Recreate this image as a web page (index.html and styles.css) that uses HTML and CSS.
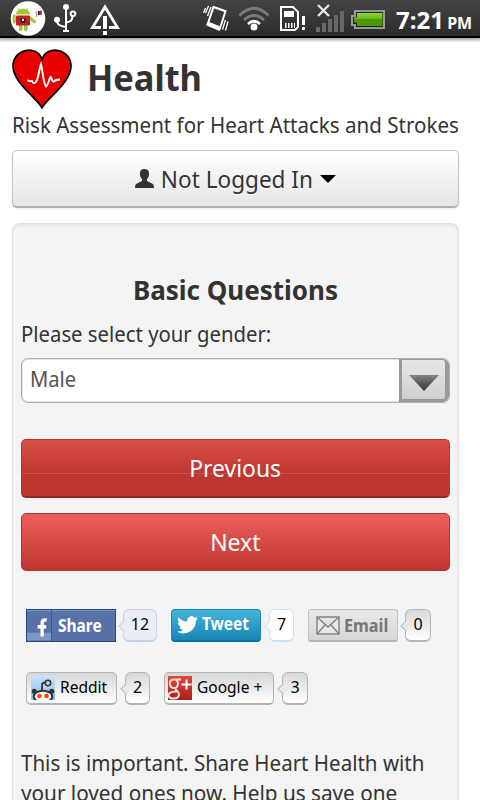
FILE: index.html
```html
<!DOCTYPE html>
<html lang="en">
<head>
<meta charset="utf-8">
<title>Health</title>
<link rel="stylesheet" href="styles.css">
</head>
<body>
<div class="status">
  <svg class="status-icons" width="390" height="37" viewBox="0 0 390 37">
    <defs><linearGradient id="bat" x2="0" y2="1"><stop offset="0" stop-color="#8bd72f"/><stop offset=".48" stop-color="#67b91c"/><stop offset=".5" stop-color="#4b9700"/><stop offset="1" stop-color="#4b9c00"/></linearGradient></defs>
    <circle cx="28" cy="18.500" r="17.300" fill="#fff"/>
    <g fill="#a4c639"><path d="M16 14.500a7 6 0 0 1 14 0z"/><rect x="12.800" y="14.500" width="3" height="9" rx="1.500"/><rect x="19" y="24" width="3.500" height="7" rx="1.500"/><rect x="24" y="24" width="3.500" height="7" rx="1.500"/><path d="M30 16l6.500 5.500-2 2.300-5-3.800z"/></g>
    <path d="M18 8l1.500 2M28 8l-1.500 2" stroke="#a4c639"/>
    <rect x="16" y="15.500" width="14" height="10" rx="1" fill="#c71d25"/><path d="M20 18l3 1 3-1-1 5h-4z" fill="#222"/><path d="M22 19h2v2h-2z" fill="#fff"/>
    <path d="M36 11l1 6" stroke="#777"/><path d="M36.500 11.500l5-1v5l-4.500.5z" fill="#ddd"/><path d="M38 11h1.800v4H38z" fill="#222"/><path d="M40 10.800h1.800v4H40z" fill="#c71d25"/>
    <g fill="none" stroke="#fff" stroke-width="2"><path d="M66 6v25M57 20c0 5 3 6 9 7M72.500 16c0 5-2 5.500-6.500 6.500"/><circle cx="73" cy="13.700" r="2.300"/></g>
    <g fill="#fff"><circle cx="66" cy="7" r="3"/><circle cx="57" cy="19.800" r="3"/><path d="M63 30h6v2h-6z"/></g>
    <path d="M101 27.500H92.500L105 7l12.500 20.500H109" fill="none" stroke="#fff" stroke-width="2.800"/><path d="M103 16h4v13h-4zM103 31h4v4h-4z" fill="#fff"/>
    <g fill="none" stroke="#fff"><path d="M213.500 7l12 4.200-5.500 17-12-5z" stroke-width="2"/><path d="M208 22l12.500 5-1 3.500-13-5.500z" fill="#fff"/><path d="M208.500 6l-3 7M205.500 8l-2 5M211 7l-3.500 9M225.500 20l-3 9.500M228 21.500l-2.500 9" stroke-width="1.300"/></g>
    <g fill="none" stroke="#7b7b7b" stroke-width="2.800"><path d="M239.500 15.500q14.500-14.500 29 0"/><path d="M244 20q10-9 20 0"/></g><path d="M248 24q6-5.500 12 0" fill="none" stroke="#fff" stroke-width="2.800"/><circle cx="254" cy="27" r="3.500" fill="#fff"/>
    <path d="M281 7h12l5 5v15l-3 3h-14z" fill="none" stroke="#fff" stroke-width="2"/><path d="M284 11h10v6h-10zM285 23h1.500v5H285zM288 23h1.500v5H288zM291 23h1.500v5H291zM294 23h1v5h-1zM302 16h3v9h-3zM302 27h3v3h-3z" fill="#fff"/>
    <path d="M316 27h4v5h-4zM322 23h4v9h-4zM328 19h4v13h-4zM334 15h4v17h-4zM340 11h4v21h-4z" fill="#686868"/><path d="M318 5l11 11M329 5l-11 11" stroke="#e8e8e8" stroke-width="2.300"/>
    <path d="M355 11h29v17h-29v-3h-3v-9h3z" fill="#222" stroke="#999" stroke-width="2"/><path d="M357 13h25.500v13H357v-3.500h-3v-5h3z" fill="url(#bat)"/>
  </svg>
  <div class="clock"><span>7:21</span> <small>PM</small></div>
</div>
<main class="page">
  <header class="brand">
    <svg width="60" height="60" viewBox="0 0 60 60"><path d="M30 59C26 50 1 34 1 17C1 0 25-5 30 10.500C35-5 59 0 59 17C59 34 34 50 30 59Z" fill="#e60000" stroke="#000" stroke-width="1.700"/><path d="M15.500 31c2 2 3 1 4.500 1 1.500 3 3.500 3 5-1 2-5 2-11 4-16 1.500 6 2 18 5 22.500 2.500-1 3-8 4.500-9.500 1.500 1 1 5 3.500 4.500 1-1.500 2-2 6-2" fill="none" stroke="#fff" stroke-width="1.900"/></svg>
    <h1><span class="fit f-h1">Health</span></h1>
  </header>
  <p class="tagline"><span class="fit f-tag">Risk Assessment for Heart Attacks and Strokes</span></p>
  <div class="login">
    <svg width="19" height="19" viewBox="0 0 19 19"><path d="M9.500 0C6 0 4.500 2 5 6c.2 2 1 3 2 4v2L1 15q-1 1-1 4h19q0-3-1-4l-6-3v-2c1-1 1.800-2 2-4 .5-4-1-6-5.500-6z" fill="#333"/></svg>
    <span class="f-login">Not Logged In</span>
    <i class="caret"></i>
  </div>
  <section class="well">
    <h2>Basic Questions</h2>
    <label><span class="fit f-label">Please select your gender:</span></label>
    <div class="select"><span class="fit f-male">Male</span><div class="select-btn"><svg width="30" height="16" viewBox="0 0 30 16"><defs><linearGradient id="ar" x2="0" y2="1"><stop stop-color="#858585"/><stop offset="1" stop-color="#333"/></linearGradient></defs><path d="M0 0h30L15 16z" fill="url(#ar)"/></svg></div></div>
    <div class="btn prev"><span class="f-btn">Previous</span></div>
    <div class="btn next"><span class="f-btn">Next</span></div>
    <div class="shares">
      <div class="share">
        <div class="chip fb"><svg width="25" height="31" viewBox="0 0 25 31"><path d="M0 23h25v8H0z" fill="#7f95c2"/><path d="M14 27V18.500h-3v-3.500h3v-2c0-4 2-5.500 6.500-5v3.500c-2.500-.2-3 .2-3 3.500H20v3.500h-2.500V27z" fill="#fff"/></svg><b class="fit">Share</b></div>
        <div class="count c-fb">12</div>
      </div>
      <div class="share">
        <div class="chip tw"><svg width="21" height="18" viewBox="0 0 24 20"><path d="M24 2.300a10 10 0 0 1-2.800.8A5 5 0 0 0 23.300.4a10 10 0 0 1-3.100 1.200 4.900 4.900 0 0 0-8.400 4.500A14 14 0 0 1 1.700 1 4.900 4.900 0 0 0 3.200 7.500 5 5 0 0 1 1 6.900a4.900 4.900 0 0 0 3.900 4.900 5 5 0 0 1-2.200.1 4.900 4.900 0 0 0 4.600 3.400A10 10 0 0 1 0 17.400 14 14 0 0 0 21.500 5 10 10 0 0 0 24 2.300z" fill="#fff"/></svg><b class="fit">Tweet</b></div>
        <div class="count c-tw">7</div>
      </div>
      <div class="share">
        <div class="chip em"><svg width="24" height="19" viewBox="0 0 24 19"><path d="M1 1h22v17H1zM1 1l11 10L23 1M1 18l8-9M23 18l-8-9" fill="#e8e8e8" stroke="#858585" stroke-width="1.500"/></svg><b class="fit">Email</b></div>
        <div class="count c-em">0</div>
      </div>
      <div class="share">
        <div class="chip plain rd"><svg width="24" height="24" viewBox="0 0 24 24"><defs><linearGradient id="sky" x2="0" y2="1"><stop stop-color="#c4e2fb"/><stop offset="1" stop-color="#8bbce9"/></linearGradient></defs><rect width="24" height="24" rx="1" fill="url(#sky)"/><path d="M11 14V8q3-3 5-1" fill="none" stroke="#333" stroke-width="1.800"/><circle cx="17" cy="7" r="2.700" fill="#ccc" stroke="#333" stroke-width="1.500"/><circle cx="3.300" cy="15.300" r="2.500" fill="#333"/><circle cx="20.700" cy="15.300" r="2.500" fill="#333"/><ellipse cx="12" cy="20.500" rx="9.300" ry="5.700" fill="#fff" stroke="#333" stroke-width="2"/><circle cx="8.500" cy="20" r="2.300" fill="#ff4500"/><circle cx="15.500" cy="20" r="2.300" fill="#ff4500"/></svg><span class="fit">Reddit</span></div>
        <div class="count">2</div>
      </div>
      <div class="share">
        <div class="chip plain gp"><svg width="24" height="24" viewBox="0 0 24 24"><defs><linearGradient id="gr" x2="0" y2="1"><stop stop-color="#e0473a"/><stop offset="1" stop-color="#a81f18"/></linearGradient></defs><path d="M0 0h24v24H0z" fill="url(#gr)"/><g fill="none" stroke="#f6dcda" stroke-width="2"><path d="M13 3.500H5C.5 4 1 11.500 5.500 12c6 0 5.500-8 1-8.500M8 11.500c-2 3 3 3 3 7-1 6-10 4.500-10.500 1 0-4 5-4 8-4"/><path d="M18.500 3.500v10M13.500 8.500h10" stroke="#fff"/></g></svg><span class="fit">Google +</span></div>
        <div class="count">3</div>
      </div>
    </div>
    <p class="msg"><span class="fit f-l1">This is important. Share Heart Health with</span><br><span class="fit f-l2">your loved ones now. Help us save one</span></p>
  </section>
</main>
</body>
</html>
```
FILE: styles.css
```css
* { box-sizing: border-box; }
html, body { height: 800px; overflow: hidden; }
body { margin: 0; background: #fff; color: #333; font-family: "Noto Sans", "Open Sans", sans-serif; font-size: 21px; }
h1, h2, p { margin: 0; }
svg { display: block; flex: none; }
/* condensed text runs */
.fit { display: inline-block; transform-origin: 0 50%; white-space: nowrap; }
.f-h1 { transform: scaleX(.955); }
.f-tag { transform: scaleX(.934); }
.f-label { transform: scaleX(.945); }
.f-male { transform: scaleX(.96); }
.f-l1 { transform: scaleX(.933); }
.f-l2 { transform: scaleX(.942); }
.f-login { display: inline-block; transform: scaleX(.94); }
.f-btn { display: inline-block; transform: scaleX(.955); }
.status { height: 38px; display: flex; background: linear-gradient(#444, #2b2b2b); border-bottom: 2px solid #000; box-shadow: 0 1px 3px 1px rgba(0,0,0,.4); }
.clock { margin-left: 6px; color: #fff; font-weight: bold; font-size: 24px; line-height: 40px; white-space: nowrap; }
.clock small { font-size: 16px; margin-left: -3px; }
.page { padding: 11px 21px 0 12px; }
.brand { display: flex; height: 60px; }
h1 { margin-left: 15px; font-size: 36px; line-height: 58px; }
.tagline { height: 41px; font-size: 22px; line-height: 30px; white-space: nowrap; }
.login { height: 58px; border: 1px solid #c4c4c4; border-bottom: 2px solid #aeaeae; border-radius: 5px; background: linear-gradient(#fff, #e5e5e5); display: flex; justify-content: center; align-items: center; font-size: 24px; text-shadow: 0 1px 1px #fff; box-shadow: 0 1px 2px rgba(0,0,0,.08); }
.login span { margin: 0 2px; white-space: nowrap; }
.caret { border: 8px solid transparent; border-top: 8px solid #000; border-bottom: 0; }
.well { margin-top: 15px; height: 577px; padding: 46px 8px 0; background: #f4f4f4; border: 1px solid #e0e0e0; border-bottom: 0; border-radius: 8px 8px 0 0; box-shadow: inset 0 2px 3px rgba(0,0,0,.06); overflow: hidden; }
h2 { font-size: 26px; line-height: 40px; text-align: center; white-space: nowrap; }
label { display: block; height: 48px; line-height: 48px; font-size: 21.500px; white-space: nowrap; }
.select { height: 45px; border: 1px solid #aeaeae; border-radius: 7px; background: #fff; display: flex; justify-content: space-between; overflow: hidden; font-size: 21px; line-height: 41px; color: #555; box-shadow: inset 0 0 0 .5px #ccc; }
.select span { margin-left: 8px; }
.select-btn { width: 50px; border: 3px solid #999; border-top-width: 1px; border-right-width: 4px; border-radius: 0 6px 6px 0; background: linear-gradient(#e7e7e7, #cfcfcf); display: flex; align-items: center; justify-content: center; padding-top: 6px; }
.btn { height: 58px; border: 1px solid #b43530; border-radius: 5px; color: #fff; text-align: center; font-size: 24px; line-height: 55px; }
.prev { margin-top: 36px; height: 59px; border-bottom: 2px solid #942923; background: linear-gradient(#dc4f4a 0, #bd362f 33px, #d34b46 33px, #d34b46 34px, #bd362f 34px); }
.next { margin-top: 15px; background: linear-gradient(#ee5f5b, #bd362f); }
.shares { display: flex; flex-wrap: wrap; padding: 38px 0 0 5px; row-gap: 30px; height: 176px; align-content: flex-start; }
.share { display: flex; height: 33px; margin-right: 14px; }
.share:nth-child(3) { margin-right: 0; }
.chip { height: 33px; width: 90px; display: flex; align-items: center; white-space: nowrap; overflow: hidden; }
.chip b { font-size: 18px; line-height: 31px; transform: scaleX(.86); }
.fb { background: #5872a7; border: 1px solid #29447e; box-shadow: inset 0 1px #8398c4; color: #fff; }
.fb svg { border-right: 1px solid #3e5a94; }
.fb b { margin-left: 6px; }
.tw { background: linear-gradient(#43b5dc, #1985b4); border: 1px solid #1687b5; border-bottom: 2px solid #0872a0; border-radius: 4px; color: #fff; }
.tw svg { margin-left: 5px; }
.tw b { margin-left: 4px; line-height: 26px; height: 30px; }
.em { background: linear-gradient(#e9e9e9, #d7d7d7); border: 1px solid #c2c2c2; border-bottom: 2px solid #b4b4b4; border-radius: 3px; color: #777; }
.em svg { margin-left: 7px; }
.em b { margin-left: 4px; transform: scaleX(.9); }
.plain { width: 91px; border: 1px solid #b5b5b5; border-bottom-width: 2px; border-radius: 5px; background: linear-gradient(#d6d6d6, #fff); color: #000; font-size: 16px; }
.plain svg { margin-left: 4px; }
.plain span { margin-left: 5px; margin-top: -2px; transform: scaleX(.97); }
.gp { width: 110px; }
.gp svg { margin-left: 3px; }
.count { position: relative; margin-left: 8px; height: 33px; width: 26px; border: 1px solid #b5b5b5; border-bottom-width: 2px; border-radius: 6px; background: linear-gradient(#d8d8d8, #fff); color: #000; font-size: 16px; line-height: 29px; text-align: center; }
.count::before { content: ""; position: absolute; left: -4px; top: 12px; width: 7px; height: 7px; background: #eaeaea; border: solid #bbb; border-width: 0 0 1px 1px; transform: rotate(45deg); }
.rd + .count { width: 25px; }
.c-em { margin-left: 7px; }
.c-fb { margin-left: 7px; background: #eaedf6; border-color: #c6d2e9; width: 34px; }
.c-fb::before { background: #eaedf6; border-color: #c6d2e9; }
.c-tw { width: 25px; background: #fff; border-color: #c7e2f6; }
.c-tw::before { background: #fff; border-color: #c7e2f6; }
.msg { font-size: 22px; line-height: 30px; white-space: nowrap; }
```
